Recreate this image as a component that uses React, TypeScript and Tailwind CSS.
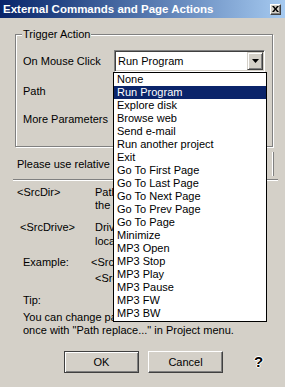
import React from "react";

const actions = [
  "None",
  "Run Program",
  "Explore disk",
  "Browse web",
  "Send e-mail",
  "Run another project",
  "Exit",
  "Go To First Page",
  "Go To Last Page",
  "Go To Next Page",
  "Go To Prev Page",
  "Go To Page",
  "Minimize",
  "MP3 Open",
  "MP3 Stop",
  "MP3 Play",
  "MP3 Pause",
  "MP3 FW",
  "MP3 BW",
];

const raised =
  "bg-[#d4d0c8] border border-t-white border-l-white border-r-[#404040] border-b-[#404040] shadow-[inset_-1px_-1px_0_#808080]";

const sunken =
  "bg-white border border-t-[#808080] border-l-[#808080] border-r-white border-b-white shadow-[inset_1px_1px_0_#404040,inset_-1px_-1px_0_#d4d0c8]";

// text that runs under the open list is cut where the list starts (x 113)
function Clip({ w, children }: { w: string; children: React.ReactNode }) {
  return <div className={`${w} overflow-hidden whitespace-nowrap`}>{children}</div>;
}

export default function App() {
  return (
    <div className="relative h-[387px] w-[285px] overflow-hidden bg-[#d4d0c8] font-['Liberation_Sans',Arial,sans-serif] text-[11px] text-black">
      {/* title bar */}
      <div className="flex h-[18px] items-center justify-between bg-linear-to-r from-[#0a246a] to-[#a6caf0] pl-[3px] pr-[3px]">
        <span className="text-[11.5px] font-bold leading-[18px] text-white">
          External Commands and Page Actions
        </span>
        <button className={`mr-[1px] flex h-[11px] w-[11px] items-center justify-center ${raised}`}>
          <svg width="7" height="6" viewBox="0 0 7 6">
            <path d="M0 0h2l1.5 2L5 0h2L4.5 3 7 6H5L3.5 4 2 6H0l2.5-3z" fill="#000" />
          </svg>
        </button>
      </div>

      {/* trigger action group */}
      <div className="relative ml-[15px] mt-[16px] h-[113px] w-[258px] border border-[#808080] shadow-[inset_1px_1px_0_#fff,1px_1px_0_#fff]">
        <span className="absolute left-[6px] top-[-7px] bg-[#d4d0c8] px-[1px] leading-[13px]">
          Trigger Action
        </span>
        <div className="pl-[7px] pt-[15px]">
          <div className="flex h-[22px] items-center">
            <span className="w-[91px]">On Mouse Click</span>
            <div className={`flex h-[22px] w-[151px] items-center ${sunken}`}>
              <span className="pl-[3px]">Run Program</span>
              <div className="ml-auto mr-[1px] flex h-[18px] w-[16px] items-center justify-center border border-t-[#d4d0c8] border-l-[#d4d0c8] border-r-[#404040] border-b-[#404040] bg-[#d4d0c8] shadow-[inset_1px_1px_0_#fff,inset_-1px_-1px_0_#808080]">
                <svg width="7" height="4" viewBox="0 0 7 4">
                  <path d="M0 0h7L3.5 4z" fill="#000" />
                </svg>
              </div>
            </div>
          </div>
          <div className="mt-[8px] flex h-[22px] items-center">
            <span className="w-[91px]">Path</span>
            <div className={`h-[22px] w-[153px] ${sunken}`} />
          </div>
          <div className="mt-[6px] flex h-[22px] items-center">
            <span className="w-[91px]">More Parameters</span>
            <div className={`h-[22px] w-[151px] ${sunken}`} />
          </div>
        </div>
      </div>

      {/* relative path note */}
      <div className="ml-[13px] mt-[5px] flex h-[24px] w-[261px] items-center border-r border-[#808080] pl-[4px] shadow-[inset_-1px_0_0_#fff]">
        <Clip w="w-[96px]">Please use relative paths</Clip>
      </div>
      <div className="ml-[13px] mt-[3px] h-[2px] w-[265px] border-t border-b border-t-[#808080] border-b-white" />

      {/* placeholders */}
      <div className="mt-[5px] flex leading-[13px]">
        <span className="w-[95px] pl-[17px]">&lt;SrcDir&gt;</span>
        <Clip w="w-[18px]">
          <div>Path of the project</div>
          <div>the source folder</div>
        </Clip>
      </div>
      <div className="mt-[8px] flex leading-[14px]">
        <span className="w-[95px] pl-[20px]">&lt;SrcDrive&gt;</span>
        <Clip w="w-[18px]">
          <div>Drive letter of</div>
          <div>local project</div>
        </Clip>
      </div>
      <div className="mt-[6px] flex leading-[16px]">
        <span className="w-[91px] pl-[23px]">Example:</span>
        <Clip w="w-[22px]">
          <div>&lt;SrcDir&gt;\app.exe</div>
          <div className="pl-[4px]">&lt;SrcDrive&gt;\data</div>
        </Clip>
      </div>
      <div className="mt-[7px] pl-[23px] leading-[14px]">Tip:</div>
      <div className="mt-[4px] pl-[23px] leading-[13px]">
        <Clip w="w-[90px]">You can change paths of all at</Clip>
        <div>once with "Path replace..." in Project menu.</div>
      </div>

      {/* buttons */}
      <div className="mt-[14px] flex items-center">
        <button className="ml-[64px] flex h-[22px] w-[75px] items-center justify-center border border-[#404040] bg-[#d4d0c8] shadow-[inset_1px_1px_0_#fff,inset_-1px_-1px_0_#808080]">
          OK
        </button>
        <button className={`ml-[9px] flex h-[22px] w-[75px] items-center justify-center ${raised}`}>
          Cancel
        </button>
        <span className="ml-[31px] text-[15px] font-bold leading-[16px] [text-shadow:1px_0_0_#fff,-1px_0_0_#fff,0_1px_0_#fff,0_-1px_0_#fff]">
          ?
        </span>
      </div>

      {/* open dropdown list */}
      <ul className="absolute left-[113px] top-[72px] h-[250px] w-[154px] border border-black bg-white">
        {actions.map((a) => (
          <li
            key={a}
            className={`h-[13px] pl-[3px] leading-[13px] ${a === "Run Program" ? "bg-[#0a246a] text-white" : ""}`}
          >
            {a}
          </li>
        ))}
      </ul>
    </div>
  );
}
